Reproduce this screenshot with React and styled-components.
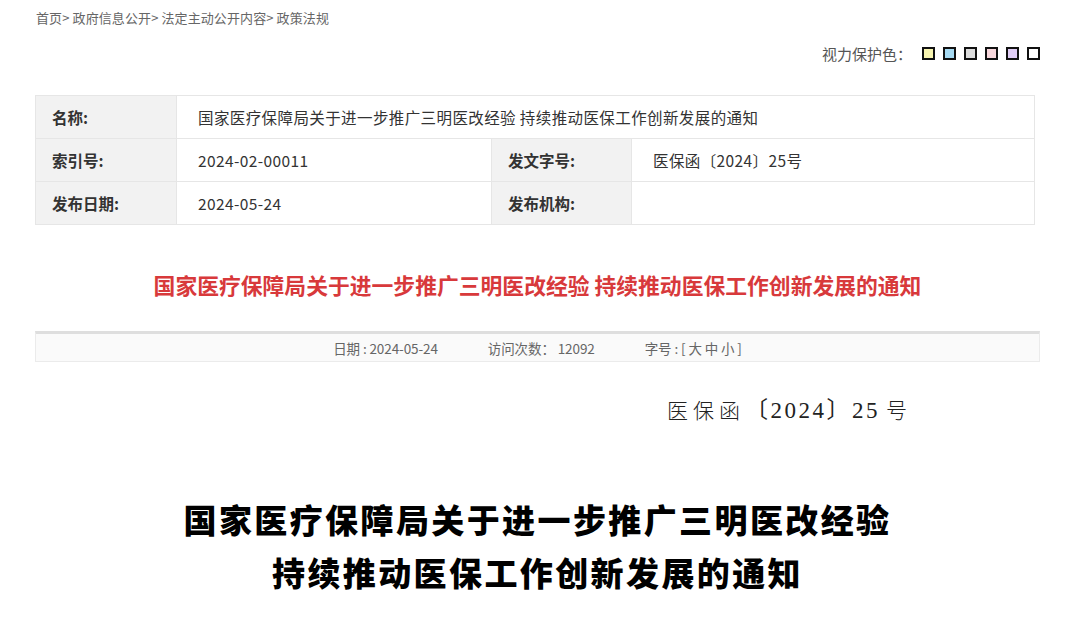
import styled, { createGlobalStyle } from "styled-components";

const GlobalStyle = createGlobalStyle`
    body {
        margin: 0;
        background: #fff;
        font-family: "Noto Sans CJK SC", "Liberation Sans", sans-serif;
        color: #333;
    }
`

const swatches = ["#f8f5b0", "#a6daf2", "#dcdcdc", "#f8d7dc", "#e0cdf5", "#ffffff"];

function App() {
    return (
        <Page>
            <GlobalStyle />
            <Crumbs>首页&gt; 政府信息公开&gt; 法定主动公开内容&gt; 政策法规</Crumbs>
            <ProtectRow>
                <span>视力保护色：</span>
                {swatches.map(c => <Swatch key={c} color={c} />)}
            </ProtectRow>

            <MetaTable>
                <colgroup>
                    <col style={{ width: 141 }} />
                    <col style={{ width: 315 }} />
                    <col style={{ width: 140 }} />
                    <col />
                </colgroup>
                <tbody>
                    <tr>
                        <Label>名称:</Label>
                        <Value colSpan={3}>国家医疗保障局关于进一步推广三明医改经验 持续推动医保工作创新发展的通知</Value>
                    </tr>
                    <tr>
                        <Label>索引号:</Label>
                        <Value>2024-02-00011</Value>
                        <Label>发文字号:</Label>
                        <Value>医保函〔2024〕25号</Value>
                    </tr>
                    <tr>
                        <Label>发布日期:</Label>
                        <Value>2024-05-24</Value>
                        <Label>发布机构:</Label>
                        <Value></Value>
                    </tr>
                </tbody>
            </MetaTable>

            <RedTitle>国家医疗保障局关于进一步推广三明医改经验 持续推动医保工作创新发展的通知</RedTitle>

            <InfoBar>
                <span>日期 : 2024-05-24</span>
                <span>访问次数： 12092</span>
                <span>字号 : [ 大 中 小 ]</span>
            </InfoBar>

            <Article>
                <DocNo>
                    <Spaced>医保函</Spaced>〔2024〕25<Spaced gap={2}>号</Spaced>
                </DocNo>
                <DocTitle>
                    <span>国家医疗保障局关于进一步推广三明医改经验</span>
                    <span>持续推动医保工作创新发展的通知</span>
                </DocTitle>
            </Article>
        </Page>
    );
}

const Page = styled.div`
    width: 1005px;
    margin-left: 35px;
    height: 632px;
    overflow: hidden;
`

const Crumbs = styled.div`
    height: 36px;
    line-height: 36px;
    font-size: 13px;
    color: #666;
    padding-left: 1px;
    letter-spacing: 0.1px;
`

const ProtectRow = styled.div`
    display: flex;
    justify-content: flex-end;
    align-items: center;
    gap: 8px;
    height: 34px;
    font-size: 15px;
    color: #555;

    span { margin-right: 2px; }
`

const Swatch = styled.i`
    display: block;
    width: 9px;
    height: 9px;
    border: 2px solid #111;
    background: ${p => p.color};
`

const MetaTable = styled.table`
    margin-top: 25px;
    width: 1000px;
    border-collapse: collapse;
    table-layout: fixed;
    font-size: 15.5px;

    td {
        height: 42px;
        border: 1px solid #e6e6e6;
        padding: 0;
        vertical-align: middle;
    }
`

const Label = styled.td`
    padding-left: 16px !important;
    background: #f2f2f2;
    font-weight: 700;
    color: #333;
`

const Value = styled.td`
    padding-left: 21px !important;
    color: #333;
    background: #fff;
    letter-spacing: 0.4px;
`

const RedTitle = styled.h1`
    margin: 42px 0 0;
    text-align: center;
    font-size: 21.8px;
    line-height: 36px;
    font-weight: 700;
    color: #d8393b;
`

const InfoBar = styled.div`
    margin-top: 28px;
    height: 27px;
    border: 1px solid #ebebeb;
    border-top: 3px solid #dedede;
    background: #fafafa;
    display: flex;
    justify-content: center;
    align-items: center;
    gap: 50px;
    font-size: 13.5px;
    color: #666;
    letter-spacing: -0.1px;
`

const Article = styled.div`
    display: flex;
    flex-direction: column;
`

const DocNo = styled.div`
    margin-top: 34px;
    align-self: flex-end;
    margin-right: 128px;
    font-family: "Liberation Serif", "Noto Sans CJK SC", serif;
    font-size: 23px;
    line-height: 30px;
    letter-spacing: 2.5px;
    color: #222;
`

const Spaced = styled.span`
    font-size: 21px;
    font-weight: 300;
    letter-spacing: 5px;
    margin-left: ${p => (p.gap ? `${p.gap * 3}px` : "0")};
`

const DocTitle = styled.div`
    margin-top: 67px;
    display: flex;
    flex-direction: column;
    align-items: center;
    font-size: 33px;
    line-height: 53px;
    font-weight: 900;
    letter-spacing: 2.4px;
    color: #000;
`

export default App;
